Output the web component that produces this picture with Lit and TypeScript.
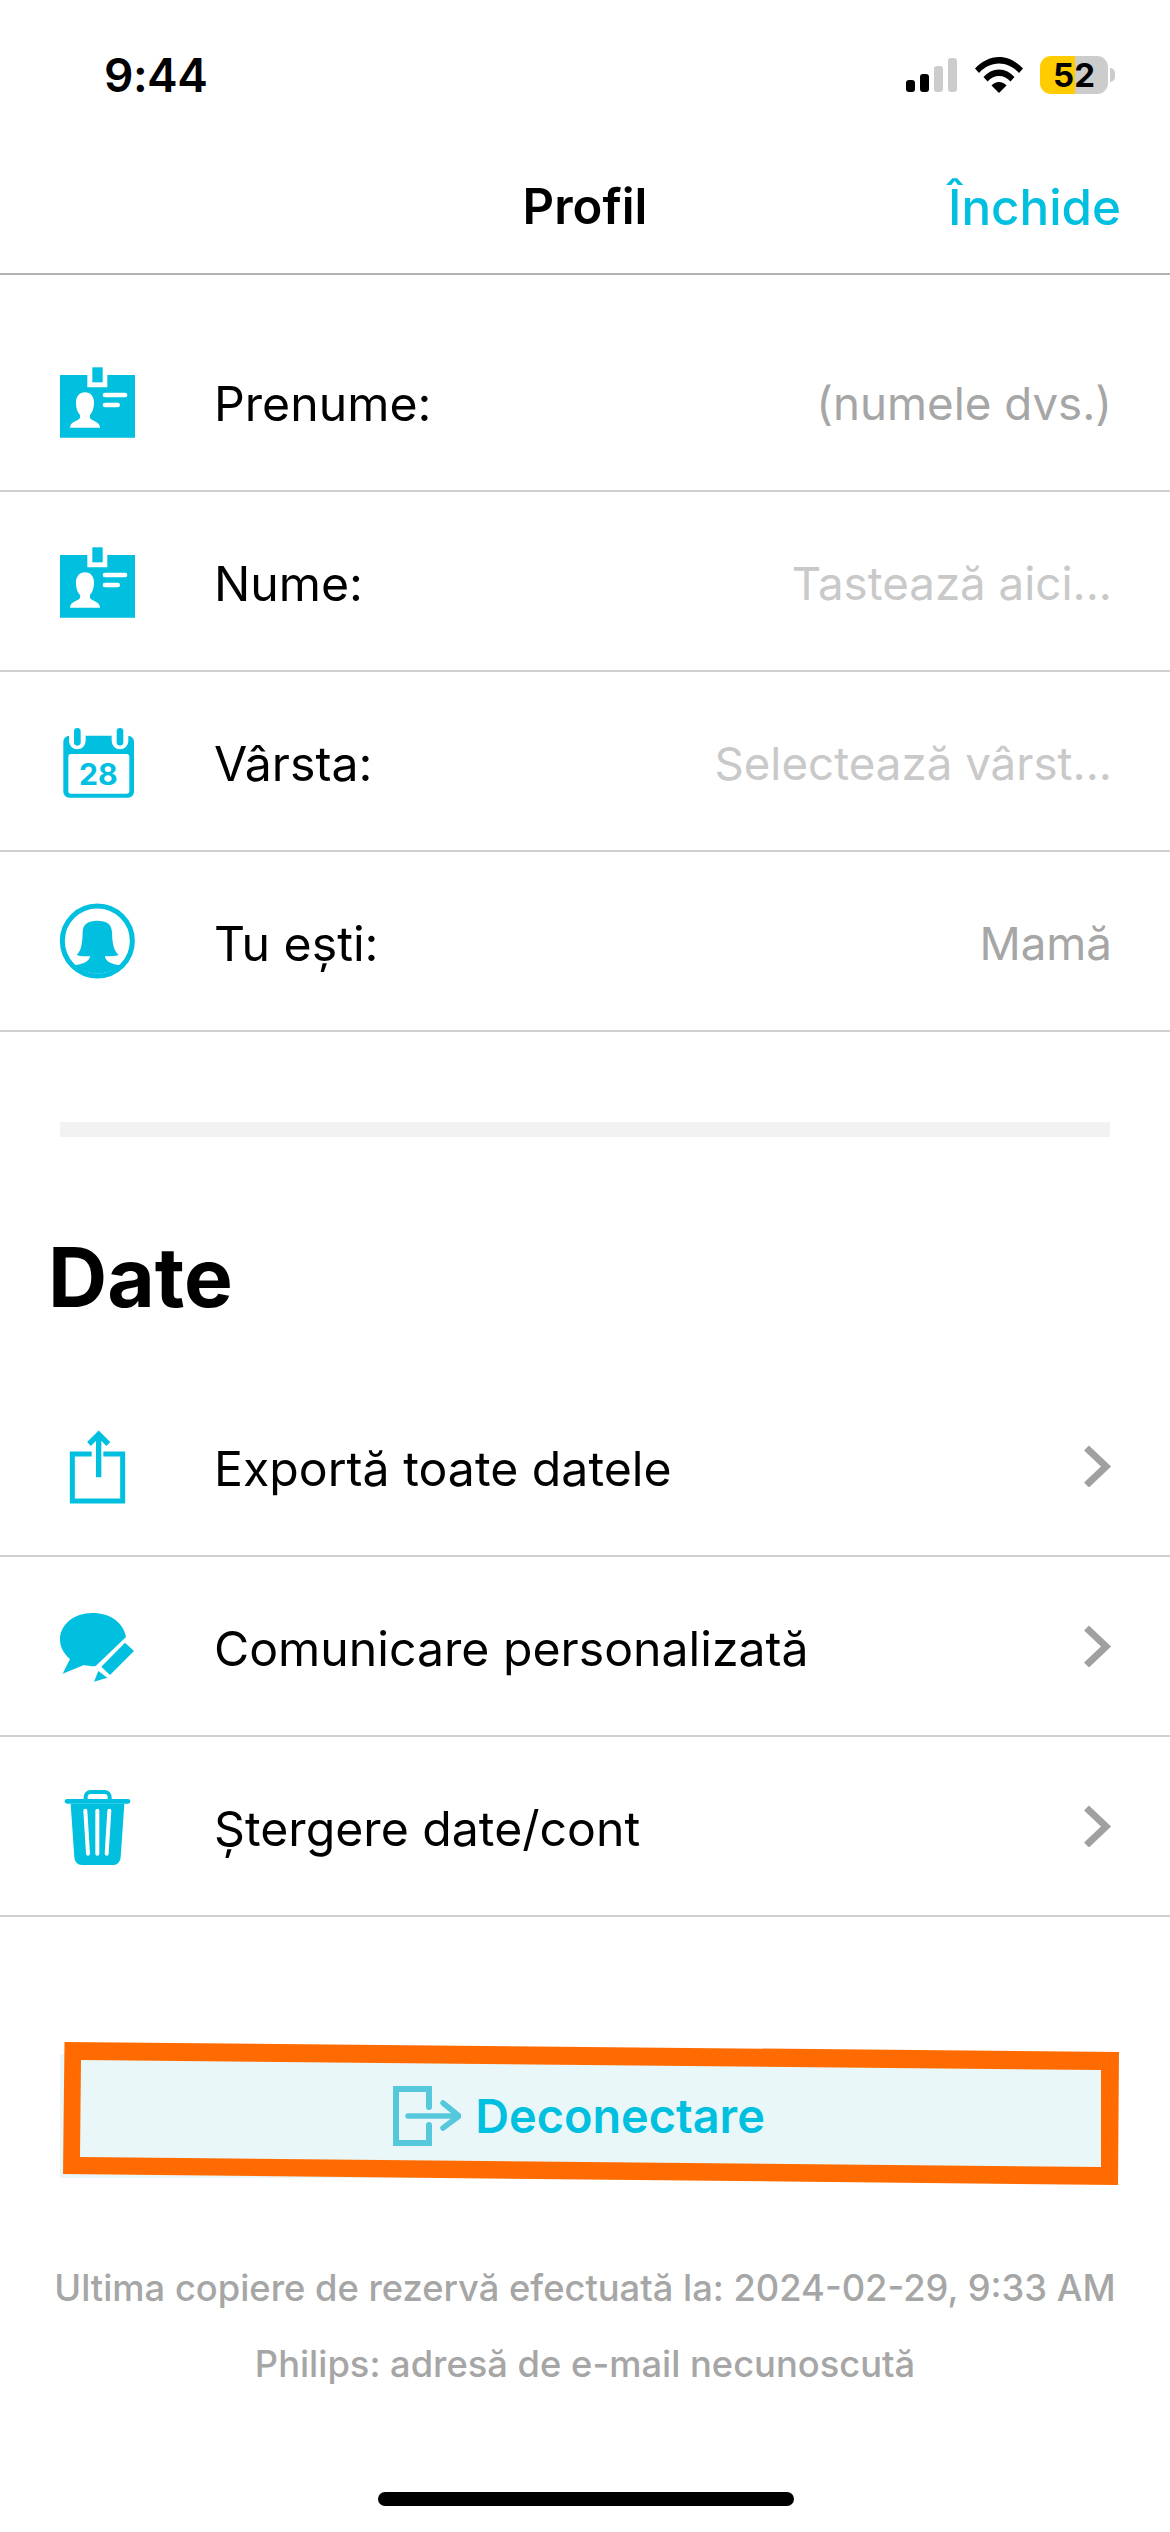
import { LitElement, html, css, svg } from "lit";
import { customElement } from "lit/decorators.js";

const C = "#00bfdf";

const idIcon = svg`
  <path fill="${C}" d="M90 108H172V145H232V108H315V296H90Z"/>
  <rect x="187" y="85" width="31" height="45" fill="${C}"/>
  <path fill="#fff" d="M165 160c-16 0-27 12-27 30 0 18 4 29 12 38v8c-2 10-30 10-30 30h90c0-20-28-20-30-30v-8c8-9 12-20 12-38 0-18-11-30-27-30z"/>
  <rect x="218" y="161" width="74" height="14" rx="7" fill="#fff"/>
  <rect x="218" y="191" width="52" height="14" rx="7" fill="#fff"/>`;

const icons: Record<string, { box: string; body: unknown }> = {
  id: { box: "0 -39 450 450", body: idIcon },
  calendar: {
    box: "0 -39 450 450",
    body: svg`
      <rect x="100" y="110" width="212" height="186" rx="18" fill="${C}"/>
      <rect x="115" y="165" width="183" height="119" rx="8" fill="#fff"/>
      <rect x="117" y="85" width="50" height="66" rx="25" fill="#fff"/>
      <rect x="245" y="85" width="50" height="66" rx="25" fill="#fff"/>
      <rect x="132" y="87" width="20" height="53" rx="10" fill="${C}"/>
      <rect x="260" y="87" width="20" height="53" rx="10" fill="${C}"/>
      <text x="147" y="258" textLength="116" lengthAdjust="spacingAndGlyphs" class="cal">28</text>`,
  },
  mother: {
    box: "0 501 450 450",
    body: svg`
      <circle cx="202" cy="726" r="105" fill="none" stroke="${C}" stroke-width="15"/>
      <path fill="${C}" d="M158 700C158 675 175 665 202 665C230 665 245 675 246 700C247 730 250 755 266 768C255 772 238 772 225 771C226 785 240 795 270 799A105 105 0 0 1 134 799C160 795 178 788 180 771C165 773 150 772 140 768C155 755 157 730 158 700Z"/>`,
  },
  share: {
    box: "0 -24 450 450",
    body: svg`
      <path fill="none" stroke="${C}" stroke-width="15" d="M185 165H127V306H278V165H220"/>
      <path fill="none" stroke="${C}" stroke-width="16" d="M206 235V110M177 135L206 106L235 135"/>`,
  },
  chat: {
    box: "0 -84 450 450",
    body: svg`
      <path fill="${C}" d="M288 114C280 70 240 42 188 42C130 42 90 78 90 122C90 145 103 165 120 180L98 224L162 198C175 202 185 202 197 201Z"/>
      <path fill="${C}" d="M285 131L312 156L240 228L214 203Z"/>
      <path fill="${C}" d="M205 216L232 236L192 248Z"/>`,
  },
  trash: {
    box: "0 456 450 450",
    body: svg`
      <rect x="104" y="600" width="197" height="14" rx="7" fill="${C}"/>
      <path fill="none" stroke="${C}" stroke-width="12" d="M167 602V594A15 15 0 0 1 182 579H224A15 15 0 0 1 239 594V602"/>
      <path fill="${C}" d="M122 614H283L272 775A23 23 0 0 1 250 798H155A23 23 0 0 1 133 775Z"/>
      <path fill="none" stroke="#fff" stroke-width="12" stroke-linecap="round" d="M166 635L174 764M202 635V764M238 635L230 764"/>`,
  },
};

const fields = [
  { icon: "id", label: "Prenume:", value: "(numele dvs.)", cls: "filled" },
  { icon: "id", label: "Nume:", value: "Tastează aici...", cls: "hint" },
  { icon: "calendar", label: "Vârsta:", value: "Selectează vârst...", cls: "hint" },
  { icon: "mother", label: "Tu ești:", value: "Mamă", cls: "filled" },
];

const links = [
  { icon: "share", label: "Exportă toate datele" },
  { icon: "chat", label: "Comunicare personalizată" },
  { icon: "trash", label: "Ștergere date/cont" },
];

@customElement("app-root")
export class AppRoot extends LitElement {
  static styles = css`
    :host {
      display: block;
      width: 1170px;
      height: 2532px;
      background: #fff;
      font-family: Inter, "Liberation Sans", sans-serif;
      color: #000;
    }
    .page {
      position: relative;
      width: 1170px;
      height: 2532px;
      overflow: hidden;
      display: flex;
      flex-direction: column;
    }
    .status {
      height: 150px;
      flex: none;
      display: flex;
      align-items: center;
      justify-content: space-between;
      padding: 0 62px 0 104px;
    }
    .time {
      font-size: 46px;
      font-weight: 600;
      letter-spacing: -0.5px;
    }
    .status-icons {
      display: flex;
      align-items: center;
      gap: 17px;
    }
    .signal,
    .wifi {
      display: block;
      flex: none;
    }
    .battery {
      width: 68px;
      height: 38px;
      border-radius: 11px;
      background: linear-gradient(90deg, #ffcc00 0 35px, #cccccc 35px 68px);
      display: flex;
      align-items: center;
      justify-content: center;
      font-size: 33px;
      font-weight: 700;
      position: relative;
    }
    .battery::after {
      content: "";
      position: absolute;
      right: -7px;
      top: 12px;
      width: 5px;
      height: 14px;
      border-radius: 0 7px 7px 0;
      background: #cccccc;
    }
    .nav {
      height: 125px;
      flex: none;
      box-sizing: border-box;
      border-bottom: 2px solid #b3b3b3;
      display: grid;
      grid-template-columns: 1fr auto 1fr;
      align-items: center;
      padding: 0 49px 10px;
    }
    .title {
      grid-column: 2;
      font-size: 49px;
      font-weight: 600;
    }
    .close {
      justify-self: end;
      font-size: 49.300px;
      font-weight: 500;
      color: #00bfdf;
    }
    .fields {
      margin-top: 37px;
      flex: none;
    }
    .row {
      height: 180px;
      box-sizing: border-box;
      border-bottom: 2px solid #d0d0d0;
      display: flex;
      align-items: center;
      padding-right: 58px;
      font-size: 48.200px;
    }
    .icon {
      width: 150px;
      height: 150px;
      flex: none;
      margin-left: 30px;
    }
    .cal {
      font-family: Inter, sans-serif;
      font-size: 88px;
      font-weight: 700;
      fill: #00bfdf;
    }
    .label {
      margin-left: 34px;
      padding-top: 4px;
      flex: none;
    }
    .value {
      margin-left: auto;
      padding-top: 4px;
      font-size: 45.700px;
    }
    .filled {
      color: #a6a6a6;
    }
    .hint {
      color: #c9c9c9;
    }
    .rule {
      height: 15px;
      flex: none;
      margin: 90px 60px 0;
      background: #f2f2f2;
    }
    .heading {
      margin: 93px 0 0 48px;
      font-size: 82px;
      line-height: 96px;
      font-weight: 700;
      flex: none;
    }
    .links {
      margin-top: 51px;
      flex: none;
    }
    .chevron {
      margin-left: auto;
      width: 30px;
      height: 42px;
      flex: none;
    }
    .logout {
      margin: 137px 60px 0;
      height: 124px;
      box-sizing: border-box;
      padding-right: 12px;
      flex: none;
      background: #e9f7f8;
      display: flex;
      align-items: center;
      justify-content: center;
      gap: 14px;
      color: #00bfdf;
      font-size: 46.800px;
      font-weight: 600;
    }
    .logout svg {
      width: 68px;
      height: 60px;
      flex: none;
    }
    .foot {
      margin-top: 88px;
      display: flex;
      flex-direction: column;
      align-items: center;
      gap: 32px;
      color: #a6a6a6;
      font-size: 36.300px;
      font-weight: 500;
      line-height: 44px;
      flex: none;
    }
    .home {
      position: absolute;
      left: 378px;
      top: 2492px;
      width: 416px;
      height: 14px;
      border-radius: 7px;
      background: #000;
    }
    .annotation {
      position: absolute;
      left: 0;
      top: 0;
      width: 1170px;
      height: 2532px;
      pointer-events: none;
    }
  `;

  private icon(name: string) {
    const i = icons[name];
    return html`<svg class="icon" viewBox=${i.box}>${i.body}</svg>`;
  }

  render() {
    return html`
      <div class="page">
        <div class="status">
          <span class="time">9:44</span>
          <div class="status-icons">
            <svg class="signal" width="52" height="34" viewBox="0 0 52 34">
              <rect x="0" y="22" width="9" height="12" rx="3" fill="#000"/>
              <rect x="14" y="16" width="9" height="18" rx="3" fill="#000"/>
              <rect x="28" y="8" width="9" height="26" rx="3" fill="#ccc"/>
              <rect x="42" y="0" width="9" height="34" rx="3" fill="#ccc"/>
            </svg>
            <svg class="wifi" width="48" height="36" viewBox="0 0 48 36">
              <path d="M0 11.500C6.500 4.500 15 0 24 0s17.500 4.500 24 11.500l-4 4.500C38.500 10 31.500 6.500 24 6.500S9.500 10 4 16Z"/>
              <path d="M8.500 20C12.500 15.500 18 12.500 24 12.500s11.500 3 15.500 7.500l-4 4.500C32.500 21 28.500 19 24 19s-8.500 2-11.500 5.500Z"/>
              <path d="M16.500 28.500C18.500 26.500 21 25 24 25s5.500 1.500 7.500 3.500L24 36Z"/>
            </svg>
            <div class="battery">52</div>
          </div>
        </div>
        <div class="nav">
          <span class="title">Profil</span>
          <span class="close">Închide</span>
        </div>
        <div class="fields">
          ${fields.map(
            (f) => html`<div class="row">
              ${this.icon(f.icon)}
              <span class="label">${f.label}</span>
              <span class="value ${f.cls}">${f.value}</span>
            </div>`
          )}
        </div>
        <div class="rule"></div>
        <div class="heading">Date</div>
        <div class="links">
          ${links.map(
            (l) => html`<div class="row">
              ${this.icon(l.icon)}
              <span class="label">${l.label}</span>
              <svg class="chevron" viewBox="0 0 30 42">
                <path d="M4.500 3L24 21.500L4.500 40" fill="none" stroke="#a0a0a0" stroke-width="7"/>
              </svg>
            </div>`
          )}
        </div>
        <div class="logout">
          <svg viewBox="0 0 68 60">
            <path d="M36 21V3H3V57H36V39" fill="none" stroke="#55c8dc" stroke-width="6" stroke-linecap="round"/>
            <path d="M15 30H65M50 17L66 30L50 42" fill="none" stroke="#55c8dc" stroke-width="5.500" stroke-linecap="round"/>
          </svg>
          <span>Deconectare</span>
        </div>
        <div class="foot">
          <span>Ultima copiere de rezervă efectuată la: 2024-02-29, 9:33 AM</span>
          <span>Philips: adresă de e-mail necunoscută</span>
        </div>
        <div class="home"></div>
        <svg class="annotation" viewBox="0 0 1170 2532">
          <path fill="#ff6b00" fill-rule="evenodd" d="M64.500 2042L1119 2052L1118 2185L63 2174ZM81 2060L80 2157L1101 2167L1101 2070Z"/>
        </svg>
      </div>
    `;
  }
}
